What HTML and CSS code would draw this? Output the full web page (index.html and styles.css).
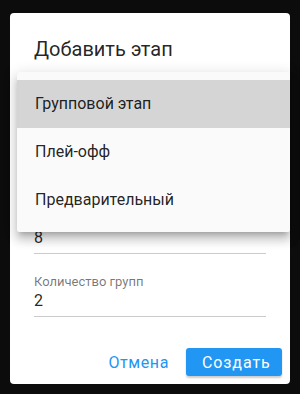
FILE: index.html
```html
<!DOCTYPE html>
<html lang="ru">

<head>
    <meta charset="utf-8">
    <meta name="viewport" content="width=device-width, initial-scale=1.0">
    <title>Добавить этап</title>
    <link rel="stylesheet" href="styles.css">
</head>

<body>
    <div class="dialog">
        <h2 class="dialog-title">Добавить этап</h2>

        <div class="dialog-content">
            <div class="field field-select">
                <label>Тип этапа</label>
                <div class="field-value">Групповой этап</div>
            </div>
            <div class="field">
                <label>Количество команд</label>
                <div class="field-value">8</div>
            </div>
            <div class="field">
                <label>Количество групп</label>
                <div class="field-value">2</div>
            </div>
        </div>

        <div class="dialog-actions">
            <button class="btn btn-text">Отмена</button>
            <button class="btn btn-primary">Создать</button>
        </div>

        <!-- выпадающее меню выбора типа этапа -->
        <ul class="menu">
            <li class="menu-item active">Групповой этап</li>
            <li class="menu-item">Плей-офф</li>
            <li class="menu-item">Предварительный</li>
        </ul>
    </div>
</body>

</html>
```

FILE: styles.css
```css
:root {
    --primary-color: #2196f3;
    --text-color: rgba(0, 0, 0, 0.87);
    --label-color: rgba(0, 0, 0, 0.54);
}

* {
    box-sizing: border-box;
}

body {
    margin: 0;
    padding: 13px 10px;
    background: #0c0c0c;
    font-family: Roboto, 'Noto Sans', sans-serif;
    color: var(--text-color);
}

.dialog {
    position: relative;
    width: 280px;
    height: 371px;
    background: #fff;
    border-radius: 4px;
    display: flex;
    flex-direction: column;
}

.dialog-title {
    margin: 0;
    padding: 24px 24px 0;
    font-size: 20px;
    font-weight: 400;
    line-height: 24px;
}

.dialog-content {
    padding: 87px 24px 0;
    display: flex;
    flex-direction: column;
    gap: 20px;
}

.field label {
    display: block;
    font-size: 13px;
    line-height: 16px;
    color: var(--label-color);
    margin-bottom: 1px;
}

.field-value {
    font-size: 16px;
    line-height: 20px;
    padding-bottom: 5px;
    border-bottom: 1px solid #cbcbcb;
}

/* селект открыт - его текст закрыт меню */
.field-select label,
.field-select .field-value {
    visibility: hidden;
}

.dialog-actions {
    margin-top: auto;
    padding: 8px;
    display: flex;
    justify-content: flex-end;
    align-items: center;
}

.btn {
    font-family: inherit;
    font-size: 16px;
    letter-spacing: 0.9px;
    height: 28px;
    padding: 0 16px;
    border: none;
    border-radius: 3px;
    background: none;
    cursor: pointer;
}

.btn-text {
    color: var(--primary-color);
    margin-right: 1px;
    letter-spacing: 0.6px;
}

.btn-primary {
    width: 96px;
    background: var(--primary-color);
    color: #fff;
    box-shadow: 0 2px 2px rgba(0, 0, 0, 0.2);
}

.menu {
    position: absolute;
    left: 7px;
    right: 0;
    top: 59px;
    margin: 0;
    padding: 8px 0;
    list-style: none;
    background: #fafafa;
    border-radius: 2px;
    box-shadow: 0 5px 5px -3px rgba(0, 0, 0, 0.2), 0 8px 10px 1px rgba(0, 0, 0, 0.14), 0 3px 14px 2px rgba(0, 0, 0, 0.12);
}

.menu-item {
    height: 48px;
    line-height: 48px;
    padding-left: 18px;
    font-size: 16px;
}

.menu-item.active {
    background: #d5d5d5;
}
```
